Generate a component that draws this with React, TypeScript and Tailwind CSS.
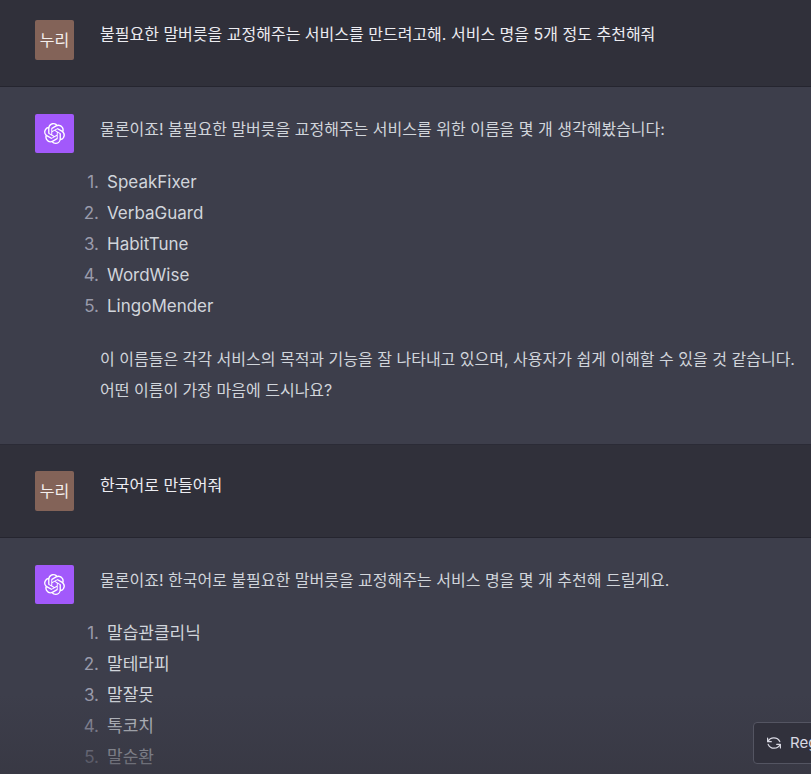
import type { ReactNode } from "react";
import { SiOpenai } from "react-icons/si";

function UserMessage({ children, first = false }: { children: ReactNode; first?: boolean }) {
  return (
    <section
      className={`flex items-start gap-[26px] border-b border-[#25252f] pr-1 pb-[26px] pl-[35px] text-[#ececf1] ${first ? "pt-5" : "pt-[26px]"}`}
    >
      <div className="flex h-10 w-[39px] shrink-0 items-center justify-center rounded-xs bg-[#836358] text-[#f4efed]">
        누리
      </div>
      <p className="leading-7">{children}</p>
    </section>
  );
}

function AssistantMessage({ children }: { children: ReactNode }) {
  return (
    <section className="flex items-start gap-[26px] border-b border-[#2b2b36] bg-[#3d3e4b] pt-[27px] pb-[38px] pl-[35px] text-[#d1d5db]">
      <div className="flex size-[39px] shrink-0 items-center justify-center rounded-xs bg-[#a259fb] text-white">
        <SiOpenai size={21} aria-label="ChatGPT" />
      </div>
      <div className="min-w-0 flex-1 leading-[31px]">{children}</div>
    </section>
  );
}

function NameList({ names }: { names: string[] }) {
  return (
    <ol className="my-[22px] text-[17px]">
      {names.map((name, index) => (
        <li key={name} className="-ml-5 flex gap-2">
          <span className="w-[19px] shrink-0 text-right text-[#9a9bab]">{index + 1}.</span>
          <span>{name}</span>
        </li>
      ))}
    </ol>
  );
}

function RefreshIcon() {
  return (
    <svg
      viewBox="0 0 16 16"
      className="size-4 shrink-0"
      fill="none"
      stroke="currentColor"
      strokeWidth="1.2"
      strokeLinecap="round"
      strokeLinejoin="round"
      aria-hidden="true"
    >
      <path d="M1.6 3v3.7h3.7M1.9 6.5C3 4.3 5.2 2.8 7.8 2.8c2.7 0 5 1.5 6 3.8" />
      <path d="M14.4 13V9.3h-3.7M14.1 9.5c-1.1 2.2-3.3 3.7-5.9 3.7-2.7 0-5-1.5-6-3.8" />
    </svg>
  );
}

export default function App() {
  return (
    <main className="relative h-screen overflow-hidden bg-[#3d3e4b] font-['Inter','Noto_Sans_CJK_KR',sans-serif] text-base break-keep">
      <div className="bg-[#30303a]">
        <UserMessage first>
          불필요한 말버릇을 교정해주는 서비스를 만드려고해. 서비스 명을 5개 정도 추천해줘
        </UserMessage>
        <AssistantMessage>
          <p>물론이죠! 불필요한 말버릇을 교정해주는 서비스를 위한 이름을 몇 개 생각해봤습니다:</p>
          <NameList names={["SpeakFixer", "VerbaGuard", "HabitTune", "WordWise", "LingoMender"]} />
          <p>
            이 이름들은 각각 서비스의 목적과 기능을 잘 나타내고 있으며, 사용자가 쉽게 이해할 수 있을 것
            같습니다. 어떤 이름이 가장 마음에 드시나요?
          </p>
        </AssistantMessage>
        <UserMessage>한국어로 만들어줘</UserMessage>
        <AssistantMessage>
          <p>물론이죠! 한국어로 불필요한 말버릇을 교정해주는 서비스 명을 몇 개 추천해 드릴게요.</p>
          <NameList names={["말습관클리닉", "말테라피", "말잘못", "톡코치", "말순환"]} />
        </AssistantMessage>
      </div>
      <div className="absolute inset-x-0 bottom-0 flex h-20 items-end justify-end overflow-hidden bg-linear-to-b from-[#373742]/0 to-[#373742]/75 pb-[10px]">
        <button
          type="button"
          className="-mr-[76px] flex h-[42px] w-[134px] shrink-0 items-center gap-2 rounded-sm border border-[#545562] bg-[#31313c] pl-3 text-[15px] whitespace-nowrap text-[#d9d9e3]"
        >
          <RefreshIcon />
          Regenerate
        </button>
      </div>
    </main>
  );
}
